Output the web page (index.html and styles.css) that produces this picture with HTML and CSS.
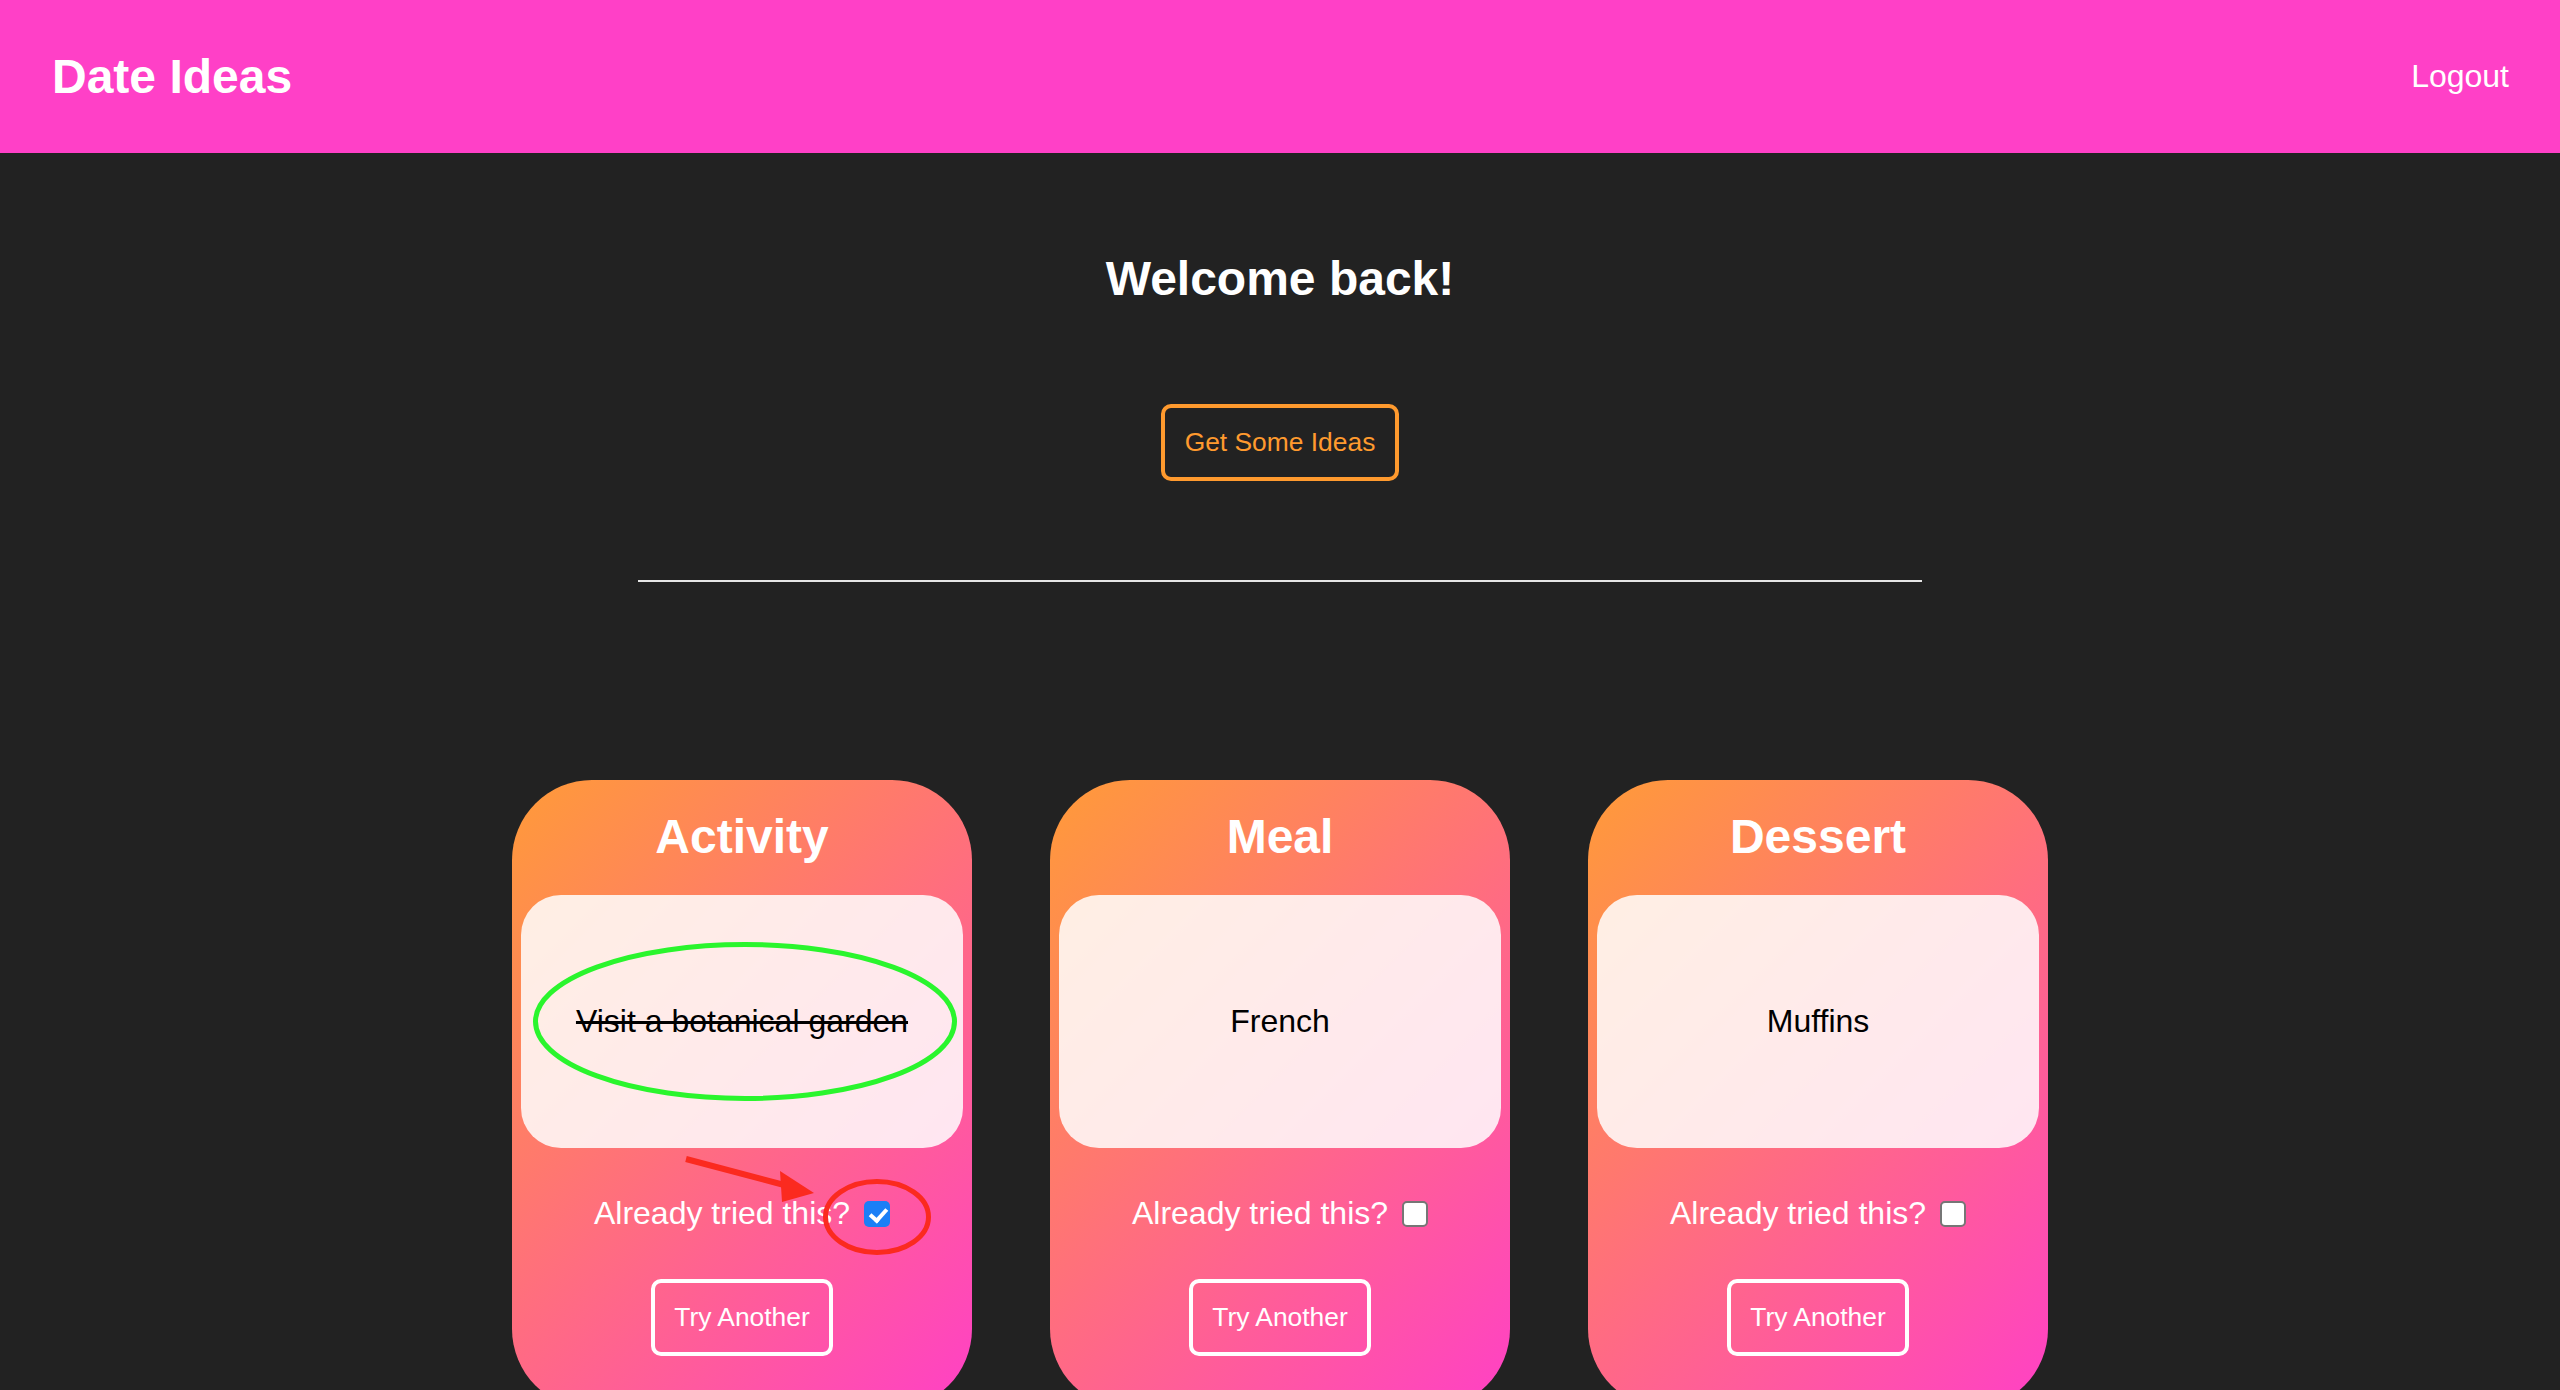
FILE: index.html
```html
<!DOCTYPE html>
<html lang="en">
<head>
<meta charset="utf-8">
<title>Date Ideas</title>
<link rel="stylesheet" href="styles.css">
</head>
<body>
<header class="topbar">
  <div class="brand">Date Ideas</div>
  <a class="logout" href="#">Logout</a>
</header>
<main class="main">
  <h1 class="welcome">Welcome back!</h1>
  <button class="ideas-btn" type="button">Get Some Ideas</button>
  <hr class="divider">
  <section class="cards">
    <article class="card">
      <h2 class="card-title">Activity</h2>
      <div class="idea"><span class="idea-text done">Visit a botanical garden</span></div>
      <label class="tried"><span>Already tried this?</span><input class="check" type="checkbox" checked></label>
      <button class="another-btn" type="button">Try Another</button>
      <svg class="annot" width="460" height="633" viewBox="0 0 460 633" aria-hidden="true">
        <ellipse cx="233" cy="241.5" rx="209.5" ry="77" fill="none" stroke="#2af52d" stroke-width="5"/>
        <ellipse cx="365" cy="437" rx="51.5" ry="35.5" fill="none" stroke="#fb2a1f" stroke-width="5"/>
        <line x1="174" y1="379" x2="276" y2="406" stroke="#fb2a1f" stroke-width="6"/>
        <polygon points="302,413 268,391 270,422" fill="#fb2a1f"/>
      </svg>
    </article>
    <article class="card">
      <h2 class="card-title">Meal</h2>
      <div class="idea"><span class="idea-text">French</span></div>
      <label class="tried"><span>Already tried this?</span><input class="check" type="checkbox"></label>
      <button class="another-btn" type="button">Try Another</button>
    </article>
    <article class="card">
      <h2 class="card-title">Dessert</h2>
      <div class="idea"><span class="idea-text">Muffins</span></div>
      <label class="tried"><span>Already tried this?</span><input class="check" type="checkbox"></label>
      <button class="another-btn" type="button">Try Another</button>
    </article>
  </section>
</main>
</body>
</html>
```
FILE: styles.css
```css
* { box-sizing: border-box; }

body {
  margin: 0;
  background: #222222;
  font-family: "Liberation Sans", Arial, Helvetica, sans-serif;
  color: #ffffff;
}

.topbar {
  height: 153px;
  background: #ff40c7;
  display: flex;
  align-items: center;
  justify-content: space-between;
  padding: 0 51px 0 52px;
}

.brand {
  font-size: 48px;
  font-weight: bold;
  line-height: 56px;
}

.logout {
  color: #ffffff;
  text-decoration: none;
  font-size: 32px;
  line-height: 37px;
}

.main {
  display: flex;
  flex-direction: column;
  align-items: center;
  padding-top: 98px;
}

.welcome {
  margin: 0;
  font-size: 48px;
  line-height: 56px;
  font-weight: bold;
}

.ideas-btn {
  margin-top: 97px;
  background: transparent;
  border: 4px solid #ff9a2e;
  border-radius: 10px;
  color: #ff9a2e;
  font-family: inherit;
  font-size: 26.4px;
  line-height: 29px;
  padding: 20px 20px;
}

.divider {
  width: 1284px;
  margin: 99px 0 0;
  border: none;
  height: 2px;
  background: #e6e6e6;
}

.cards {
  display: flex;
  gap: 78px;
  margin-top: 198px;
}

.card {
  position: relative;
  width: 460px;
  padding: 0 9px 53px;
  border-radius: 80px;
  background: linear-gradient(135deg, #ff9b38 0%, #ff40c6 100%);
  display: flex;
  flex-direction: column;
  align-items: center;
}

.card-title {
  margin: 29px 0 0;
  font-size: 48px;
  line-height: 56px;
  font-weight: bold;
}

.idea {
  margin-top: 30px;
  width: 100%;
  height: 253px;
  border-radius: 40px;
  background: rgba(255, 255, 255, 0.85);
  display: flex;
  align-items: center;
  justify-content: center;
}

.idea-text {
  color: #000000;
  font-size: 32px;
  line-height: 37px;
}

.idea-text.done {
  text-decoration: line-through;
}

.tried {
  margin-top: 47px;
  display: flex;
  align-items: center;
  font-size: 32px;
  line-height: 37px;
}

.check {
  appearance: none;
  -webkit-appearance: none;
  margin: 0 0 0 14px;
  width: 26px;
  height: 26px;
  border: 2px solid #767676;
  border-radius: 5px;
  background: #ffffff;
  position: relative;
}

.check:checked {
  border: none;
  background: #1b7ff6;
}

.check:checked::after {
  content: "";
  position: absolute;
  left: 9px;
  top: 4px;
  width: 7px;
  height: 13px;
  border-right: 4px solid #ffffff;
  border-bottom: 4px solid #ffffff;
  transform: rotate(42deg);
}

.another-btn {
  margin-top: 47px;
  background: transparent;
  border: 4px solid #ffffff;
  border-radius: 10px;
  color: #ffffff;
  font-family: inherit;
  font-size: 26.4px;
  line-height: 29px;
  padding: 20px 19px;
}

.annot {
  position: absolute;
  left: 0;
  top: 0;
  overflow: visible;
  pointer-events: none;
}
```
